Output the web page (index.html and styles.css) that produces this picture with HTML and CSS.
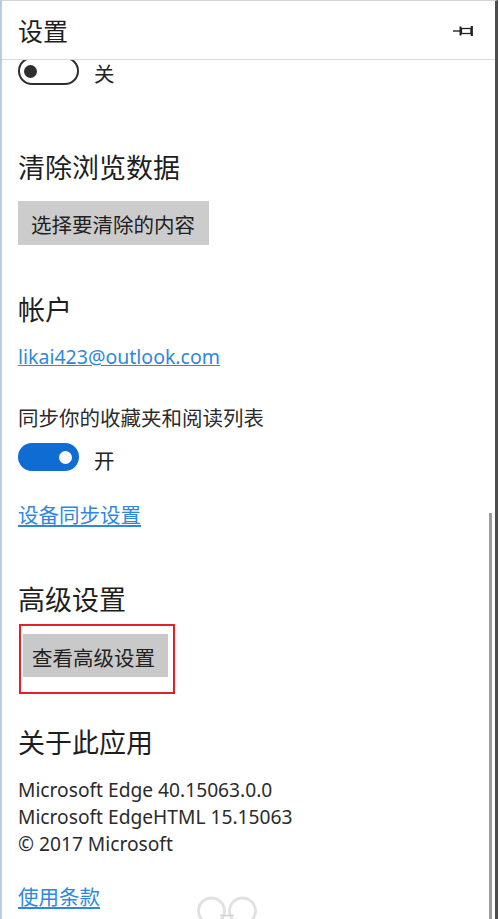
FILE: index.html
```html
<!DOCTYPE html>
<html lang="zh-CN">
<head>
<meta charset="utf-8">
<title>设置</title>
<link rel="stylesheet" href="styles.css">
</head>
<body>
<div class="panel">
  <header class="header">
    <h1 class="title">设置</h1>
    <svg class="pin" width="22" height="12" viewBox="0 0 22 12" aria-hidden="true">
      <path d="M0 6H7" stroke="#333" stroke-width="1.5"/>
      <path d="M7.5 1.5V10.5" stroke="#222" stroke-width="2"/>
      <rect x="8.5" y="3.5" width="9.5" height="5" stroke="#222" stroke-width="1.3" fill="none"/>
      <path d="M18.8 1V11" stroke="#222" stroke-width="2.2"/>
    </svg>
  </header>
  <main class="content">
    <div class="toggle-row toggle-row--top">
      <span class="toggle-clip">
        <span class="toggle toggle--off"><span class="knob"></span></span>
      </span>
      <span class="toggle-label label-off">关</span>
    </div>

    <h2 class="section-title st-clear">清除浏览数据</h2>
    <button class="btn btn-clear">选择要清除的内容</button>

    <h2 class="section-title st-account">帐户</h2>
    <a class="email" href="#">likai423@outlook.com</a>
    <p class="text sync-text">同步你的收藏夹和阅读列表</p>
    <div class="toggle-row sync-toggle">
      <span class="toggle toggle--on"><span class="knob"></span></span>
      <span class="toggle-label label-on">开</span>
    </div>
    <a class="link device-link" href="#">设备同步设置</a>

    <h2 class="section-title st-adv">高级设置</h2>
    <div class="highlight">
      <button class="btn btn-adv">查看高级设置</button>
    </div>

    <h2 class="section-title st-about">关于此应用</h2>
    <div class="about-lines">
      <div class="about-line">Microsoft Edge 40.15063.0.0</div>
      <div class="about-line">Microsoft EdgeHTML 15.15063</div>
      <div class="about-line">© 2017 Microsoft</div>
    </div>
    <a class="link terms-link" href="#">使用条款</a>
  </main>
  <div class="scrollbar"></div>
  <svg class="bottom-arcs" width="66" height="24" viewBox="0 0 66 24" aria-hidden="true">
    <circle cx="16.5" cy="16" r="13" stroke="#e1e1e1" stroke-width="3" fill="none"/>
    <circle cx="47.5" cy="16" r="13" stroke="#e1e1e1" stroke-width="3" fill="none"/>
    <path d="M25 20.5H39" stroke="#d0d0d0" stroke-width="1.5"/>
  </svg>
</div>
</body>
</html>
```
FILE: styles.css
```css
html, body {
  margin: 0;
  padding: 0;
  background: #ffffff;
}

body {
  font-family: "Noto Sans CJK SC", "Noto Sans", sans-serif;
  color: #2b2b2b;
}

.panel {
  position: relative;
  width: 498px;
  height: 919px;
  box-sizing: border-box;
  border-left: 2px solid #b5cde4;
  border-right: 3px solid #4d4d4d;
  border-top: 1px solid #d6d6d6;
  background: #ffffff;
  overflow: hidden;
  display: flex;
  flex-direction: column;
}

.header {
  flex: none;
  height: 58px;
  border-bottom: 1px solid #dadada;
  display: flex;
  align-items: center;
  justify-content: space-between;
  padding: 0 20px 0 16px;
}

.title {
  margin: 0;
  font-size: 25px;
  font-weight: 400;
  line-height: 58px;
  color: #1e1e1e;
}

.pin {
  display: block;
  margin-top: 1px;
}

.content {
  flex: 1;
  display: flex;
  flex-direction: column;
  align-items: flex-start;
  padding-left: 16px;
}

/* toggles */
.toggle-row {
  display: flex;
  align-items: flex-start;
  height: 28px;
}

.toggle-row--top {
  height: 25px;
}

.toggle-clip {
  display: flex;
  align-items: flex-end;
  height: 25px;
  overflow: hidden;
}

.toggle {
  flex: none;
  width: 61px;
  height: 28px;
  box-sizing: border-box;
  border-radius: 14px;
  display: flex;
  align-items: center;
}

.toggle--off {
  border: 2px solid #2e2e2e;
  padding: 0 4px;
  justify-content: flex-start;
}

.toggle--on {
  background: #0f6cd2;
  padding: 0 7px;
  justify-content: flex-end;
}

.knob {
  width: 13px;
  height: 13px;
  border-radius: 50%;
}

.toggle--off .knob {
  background: #2e2e2e;
}

.toggle--on .knob {
  background: #ffffff;
}

.toggle-label {
  margin-left: 15px;
  font-family: "Noto Sans", "Noto Sans CJK SC", sans-serif;
  font-size: 20.5px;
  line-height: 28px;
  color: #222;
}

.label-off { margin-top: 0; }
.label-on { margin-top: 4px; }

/* section headings */
.section-title {
  margin: 0;
  font-size: 27px;
  font-weight: 400;
  line-height: 36px;
  color: #1e1e1e;
}

.st-clear { margin-top: 64px; }
.st-account { margin-top: 46px; }
.st-adv { margin-top: 53px; }
.st-about { margin-top: 30px; }

/* buttons */
.btn {
  border: none;
  margin: 0;
  font-family: "Noto Sans CJK SC", "Noto Sans", sans-serif;
  font-size: 20.5px;
  line-height: 28px;
  color: #222;
  text-align: left;
  cursor: pointer;
}

.btn-clear {
  margin-top: 16px;
  width: 191px;
  height: 44px;
  padding: 2px 0 0 13px;
  background: #cccccc;
}

.highlight {
  margin-top: 7px;
  margin-left: 1px;
  width: 156px;
  height: 70px;
  box-sizing: border-box;
  border: 2px solid #e2202c;
  padding: 8px 0 0 2px;
}

.btn-adv {
  width: 145px;
  height: 43px;
  padding: 2px 0 0 9px;
  background: #c9c9c9;
}

/* text and links */
.email {
  margin-top: 16px;
  font-family: "Noto Sans", "Noto Sans CJK SC", sans-serif;
  font-size: 19.5px;
  line-height: 28px;
  color: #2f87dc;
  text-decoration: underline;
}

.text {
  margin: 0;
  font-size: 20.5px;
  line-height: 28px;
  color: #2b2b2b;
}

.sync-text { margin-top: 32px; }
.sync-toggle { margin-top: 12px; }

.link {
  font-size: 20.5px;
  line-height: 28px;
  color: #2f87dc;
  text-decoration: underline;
}

.device-link { margin-top: 29px; }
.terms-link { margin-top: 25px; }

.about-lines {
  margin-top: 16px;
  font-family: "Noto Sans", "Noto Sans CJK SC", sans-serif;
  font-size: 19.2px;
  line-height: 27px;
  color: #2b2b2b;
}

/* overlays */
.scrollbar {
  position: absolute;
  left: 487px;
  top: 512px;
  width: 3px;
  height: 406px;
  background: #9d9d9d;
}

.bottom-arcs {
  position: absolute;
  left: 193px;
  top: 894px;
}
```
